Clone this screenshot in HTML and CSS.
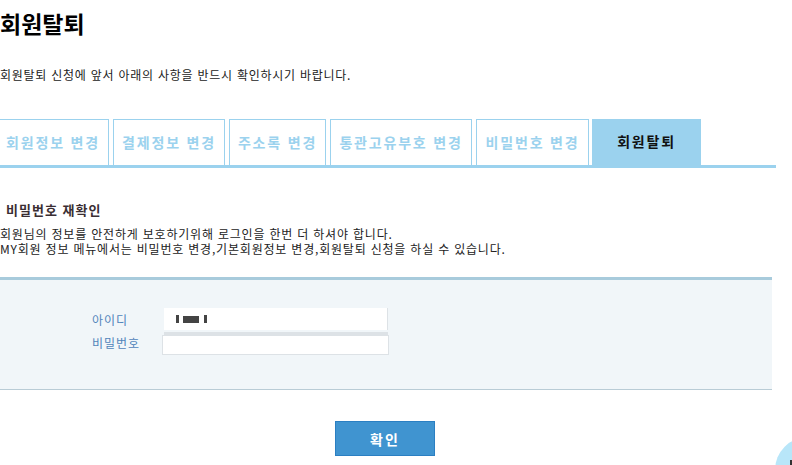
FILE: index.html
```html
<!DOCTYPE html>
<html lang="ko">
<head>
    <meta charset="UTF-8">
    <meta name="viewport" content="width=device-width, initial-scale=1.0">
    <title>회원탈퇴</title>
    <link rel="stylesheet" href="styles.css">
</head>

<body>
    <div class="page">
        <h1 class="page-title">회원탈퇴</h1>
        <p class="intro">회원탈퇴 신청에 앞서 아래의 사항을 반드시 확인하시기 바랍니다.</p>

        <ul class="tabs">
            <li class="tab tab-info">회원정보 변경</li>
            <li class="tab tab-pay">결제정보 변경</li>
            <li class="tab tab-addr">주소록 변경</li>
            <li class="tab tab-customs">통관고유부호 변경</li>
            <li class="tab tab-pw">비밀번호 변경</li>
            <li class="tab active">회원탈퇴</li>
        </ul>

        <div class="section">
            <h3 class="section-title">비밀번호 재확인</h3>
            <p class="notice">
                회원님의 정보를 안전하게 보호하기위해 로그인을 한번 더 하셔야 합니다.<br>
                MY회원 정보 메뉴에서는 비밀번호 변경,기본회원정보 변경,회원탈퇴 신청을 하실 수 있습니다.
            </p>
        </div>

        <div class="login-box">
            <div class="row">
                <label class="row-label">아이디</label>
                <div class="field field-id">
                    <span class="mask mask-a"></span>
                    <span class="mask mask-b"></span>
                    <span class="mask mask-c"></span>
                </div>
            </div>
            <div class="row">
                <label class="row-label" for="password">비밀번호</label>
                <div class="field-wrap">
                    <input type="password" id="password" class="field field-pw">
                </div>
            </div>
        </div>

        <div class="actions">
            <button class="btn-confirm">확인</button>
        </div>
    </div>

    <!-- 우측 하단 플로팅 버튼 -->
    <div class="float-btn"><span class="float-icon"></span></div>
</body>
</html>
```

FILE: styles.css
```css
/* 기본 */
* {
    margin: 0;
    padding: 0;
    box-sizing: border-box;
}

body {
    font-family: "Noto Sans CJK KR", sans-serif;
    color: #222;
    background: #fff;
    overflow: hidden;
}

.page {
    width: 776px;
}

/* 타이틀 */
.page-title {
    padding-top: 8px;
    height: 38px;
    line-height: 30px;
    font-size: 23px;
    font-weight: 700;
    color: #000;
}

.intro {
    margin-top: 29px;
    line-height: 16px;
    font-size: 12px;
    letter-spacing: 0.75px;
    color: #222;
}

/* 탭 */
.tabs {
    list-style: none;
    display: flex;
    gap: 4px;
    margin-top: 36px;
    margin-left: -3px;
    width: 779px;
    border-bottom: 3px solid #9bd2ee;
}

.tab {
    height: 46px;
    border: 1px solid #9bd2ee;
    border-bottom: none;
    line-height: 44px;
    font-size: 14px;
    font-weight: 700;
    letter-spacing: 1.8px;
    color: #9bd2ee;
    text-align: center;
    white-space: nowrap;
}

.tab-info { width: 112px; }
.tab-pay { width: 112px; }
.tab-addr { width: 97px; }
.tab-customs { width: 142px; }
.tab-pw { width: 113px; }

.tab.active {
    width: 109px;
    margin-left: -1px;
    border: none;
    background: #9bd2ee;
    color: #111;
}

/* 비밀번호 재확인 */
.section {
    margin-top: 34px;
}

.section-title {
    padding-left: 6px;
    line-height: 16px;
    font-size: 13px;
    font-weight: 700;
    letter-spacing: 1px;
    color: #3a2e33;
}

.notice {
    margin-top: 8px;
    line-height: 15px;
    font-size: 12px;
    letter-spacing: 0.8px;
    color: #222;
}

/* 로그인 박스 */
.login-box {
    margin-top: 21px;
    margin-right: 4px;
    height: 113px;
    padding-top: 28px;
    padding-left: 92px;
    background: #f1f6f9;
    border-top: 3px solid #a8cbdc;
    border-bottom: 1px solid #b9ccd6;
}

.row {
    display: flex;
    align-items: center;
}

.row-label {
    width: 70px;
    font-size: 12px;
    letter-spacing: 1px;
    color: #5185bb;
}

.field-id {
    display: flex;
    align-items: center;
    width: 224px;
    height: 22px;
    margin-left: 2px;
    padding-left: 12px;
    background: #fff;
    border-right: 1px solid #dde2e6;
}

.mask {
    display: inline-block;
    background: #444;
}

.mask-a { width: 3px; height: 8px; }
.mask-b { width: 16px; height: 7px; margin-left: 4px; margin-top: 1px; }
.mask-c { width: 3px; height: 8px; margin-left: 5px; }

.field-wrap {
    margin-top: 2px;
    margin-left: 2px;
    width: 224px;
    border-top: 3px solid #dde2e6;
}

.field-pw {
    display: block;
    width: 227px;
    height: 20px;
    margin-left: -2px;
    border: 1px solid #dde2e6;
    background: #fff;
    outline: none;
}

/* 버튼 */
.actions {
    margin-top: 31px;
    width: 770px;
    text-align: center;
}

.btn-confirm {
    width: 100px;
    height: 35px;
    background: #4094d0;
    border: 1px solid #2b7fc2;
    color: #fff;
    font-family: "Noto Sans CJK KR", sans-serif;
    font-size: 14px;
    font-weight: 700;
    letter-spacing: 2px;
    cursor: pointer;
}

/* 플로팅 버튼 */
.float-btn {
    position: fixed;
    left: 775px;
    top: 437px;
    width: 66px;
    height: 66px;
    border-radius: 50%;
    background: #b8e6f9;
}

.float-icon {
    position: absolute;
    left: 15px;
    top: 23px;
    width: 3px;
    height: 5px;
    background: #333;
}
```
